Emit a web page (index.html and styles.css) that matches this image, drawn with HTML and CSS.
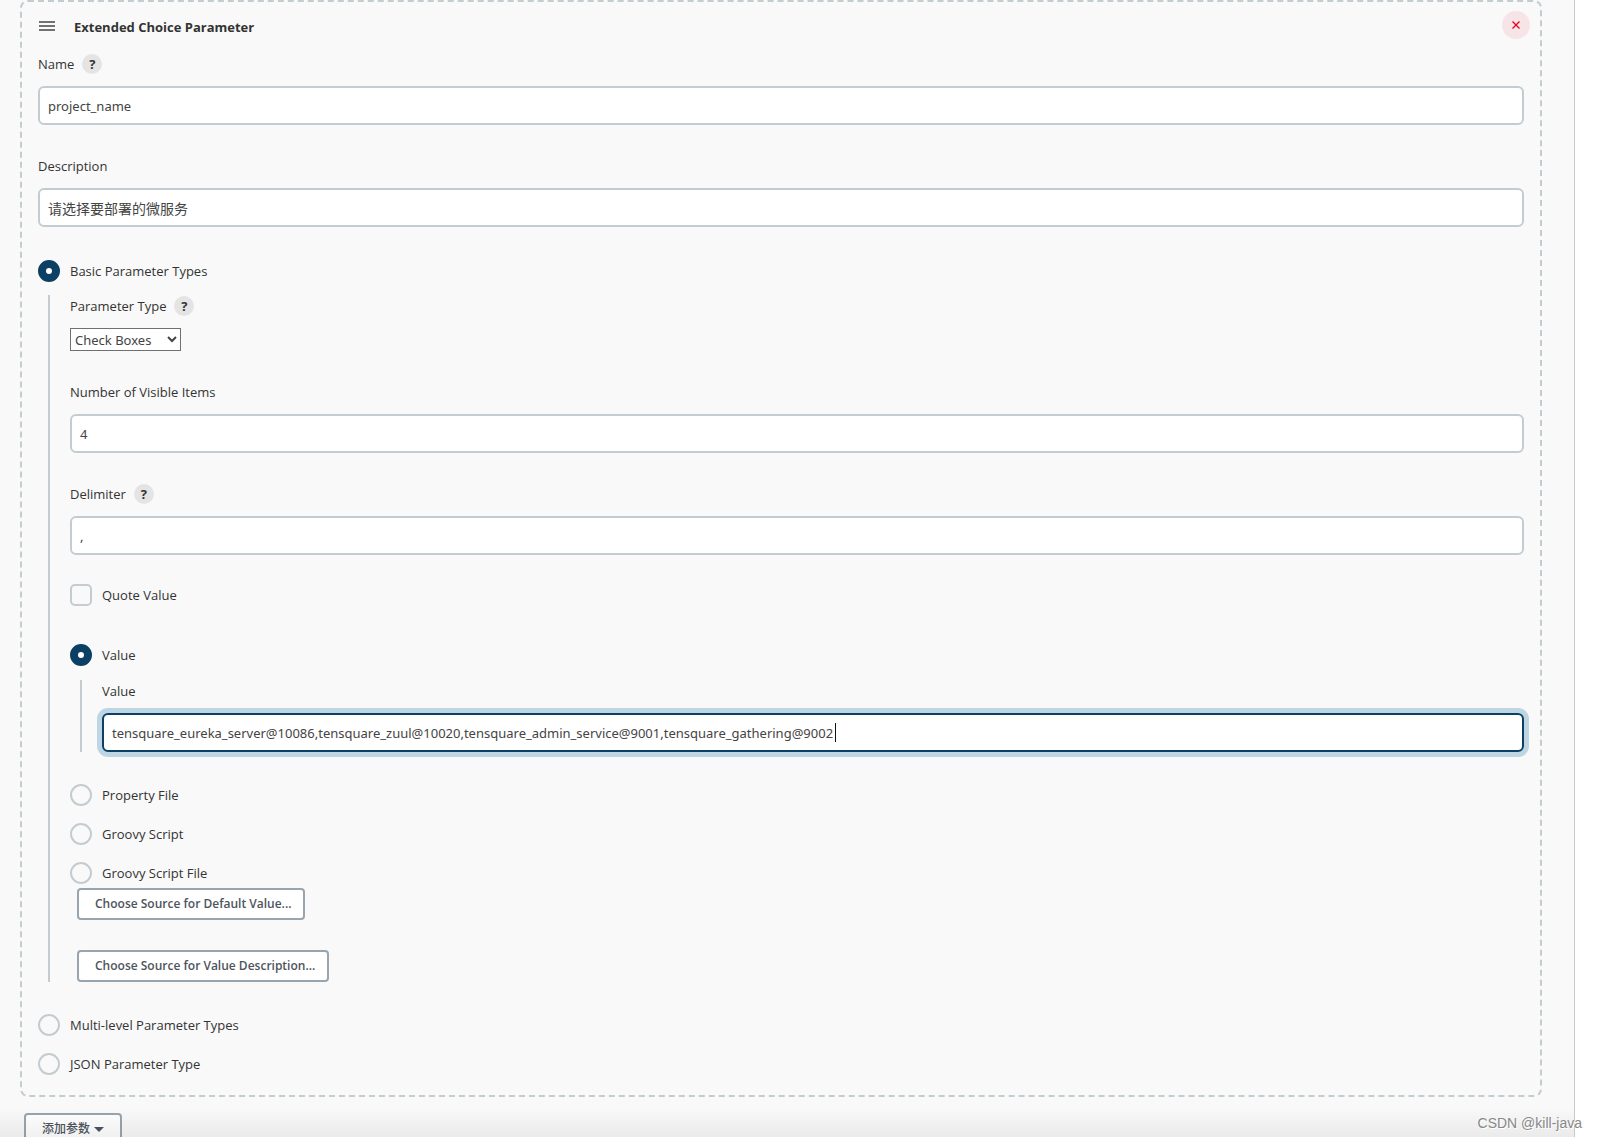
FILE: index.html
```html
<!DOCTYPE html>
<html lang="zh-CN">
<head>
<meta charset="utf-8">
<meta name="viewport" content="width=device-width, initial-scale=1">
<title>Extended Choice Parameter</title>
<link rel="stylesheet" href="styles.css">
</head>
<body>
<main class="panel">
  <form class="content">
    <section class="chunk">
      <header class="chunk-header">
        <svg class="drag" viewBox="0 0 16 10" aria-hidden="true"><path d="M0 1h16M0 5h16M0 9h16"/></svg>
        <h1 class="title">Extended Choice Parameter</h1>
        <button class="close" type="button" aria-label="Delete"><svg viewBox="0 0 8 8"><path d="M0.5 0.5l7 7M7.5 0.5l-7 7"/></svg></button>
      </header>

      <div class="field">
        <div class="label-row"><label for="name">Name</label><button class="help" type="button">?</button></div>
        <input class="text" id="name" type="text" value="project_name">
      </div>
      <div class="field">
        <div class="label-row"><label for="desc">Description</label></div>
        <input class="text text-cjk" id="desc" type="text" value="请选择要部署的微服务">
      </div>

      <div class="option"><input class="radio" type="radio" name="kind" id="basic" checked><label for="basic">Basic Parameter Types</label></div>
      <div class="nested">
        <div class="field">
          <div class="label-row"><label for="ptype">Parameter Type</label><button class="help" type="button">?</button></div>
          <select class="select" id="ptype"><option>Check Boxes</option></select>
        </div>
        <div class="field">
          <div class="label-row"><label for="count">Number of Visible Items</label></div>
          <input class="text" id="count" type="text" value="4">
        </div>
        <div class="field field-last">
          <div class="label-row"><label for="delim">Delimiter</label><button class="help" type="button">?</button></div>
          <input class="text" id="delim" type="text" value=",">
        </div>
        <div class="option quote"><input class="check" type="checkbox" id="quote"><label for="quote">Quote Value</label></div>

        <div class="option"><input class="radio" type="radio" name="source" id="value" checked><label for="value">Value</label></div>
        <div class="nested">
          <div class="label-row"><label for="value-text">Value</label></div>
          <div class="active">
            <input class="text text-active" id="value-text" type="text" value="tensquare_eureka_server@10086,tensquare_zuul@10020,tensquare_admin_service@9001,tensquare_gathering@9002">
            <span class="caret"></span>
          </div>
        </div>
        <div class="options">
          <div class="option"><input class="radio" type="radio" name="source" id="pfile"><label for="pfile">Property File</label></div>
          <div class="option"><input class="radio" type="radio" name="source" id="groovy"><label for="groovy">Groovy Script</label></div>
          <div class="option"><input class="radio" type="radio" name="source" id="gfile"><label for="gfile">Groovy Script File</label></div>
        </div>
        <div class="sources">
          <button class="button" type="button">Choose Source for Default Value...</button>
          <button class="button" type="button">Choose Source for Value Description...</button>
        </div>
      </div>
      <div class="options">
        <div class="option"><input class="radio" type="radio" name="kind" id="multi"><label for="multi">Multi-level Parameter Types</label></div>
        <div class="option"><input class="radio" type="radio" name="kind" id="json"><label for="json">JSON Parameter Type</label></div>
      </div>
    </section>
    <button class="button add" type="button">添加参数 <span class="arrow"></span></button>
  </form>
  <div class="fade"></div>
</main>
<div class="watermark">CSDN @kill-java</div>
</body>
</html>
```
FILE: styles.css
```css
* { box-sizing: border-box; }

body {
  margin: 0;
  height: 100vh;
  padding: 0 22px 3px 0;
  position: relative;
  overflow: hidden;
  background: #fff;
  color: #333;
  font: 500 13px/20px "Open Sans", "Noto Sans CJK SC", sans-serif;
}

.panel {
  position: relative;
  height: 100%;
  overflow: hidden;
  background: #f9f9f9;
  border-right: 1px solid #c4cbcd;
}

.content { padding: 0 32px 0 20px; }

.chunk {
  padding: 9px 16px 20px;
  border: 2px dashed #c3cdd1;
  border-radius: 8px;
}

.chunk-header {
  display: flex;
  align-items: center;
  height: 28px;
  margin: 0 -6px 15px 0;
}

.drag {
  width: 16px;
  height: 10px;
  margin: 2px 0 0 1px;
  fill: none;
  stroke: #444;
  stroke-width: 1.5;
}

.title {
  flex: 1;
  margin: 4px 0 0 19px;
  font-size: 13px;
  line-height: 20px;
  font-weight: 700;
}

.close {
  display: grid;
  place-items: center;
  width: 28px;
  height: 28px;
  padding: 0;
  border: 0;
  border-radius: 50%;
  background: #f7e4e6;
}

.close svg {
  width: 8px;
  height: 8px;
  stroke: #e6001f;
  stroke-width: 1.3;
}

.field { margin-bottom: 31px; }
.field-last { margin-bottom: 29px; }

.label-row {
  display: flex;
  align-items: center;
  gap: 8px;
  height: 20px;
  margin-bottom: 12px;
}

.help {
  width: 20px;
  height: 20px;
  padding: 0;
  border: 0;
  border-radius: 50%;
  background: #e4e4e4;
  color: #333;
  font: 700 13px/20px "Open Sans", sans-serif;
}

.text {
  display: block;
  width: 100%;
  height: 39px;
  padding: 0 8px;
  border: 2px solid #c3cdd1;
  border-radius: 6px;
  background: #fff;
  color: #444;
  font: 400 13px/20px "Noto Sans", "Noto Sans CJK SC", sans-serif;
  outline: 0;
}

.text-cjk {
  font-size: 14px;
  font-family: "Noto Sans CJK SC", sans-serif;
}

.active { position: relative; }

.text-active {
  border-color: #0b4064;
  box-shadow: 0 0 0 5px #bed5e3;
}

.caret {
  position: absolute;
  left: 733px;
  top: 10px;
  width: 1px;
  height: 19px;
  background: #111;
}

.select {
  display: block;
  width: 111px;
  height: 23px;
  padding: 0;
  border: 1px solid #707070;
  border-radius: 0;
  background: #fff;
  color: #444;
  font: 400 13px/20px "Noto Sans", sans-serif;
}

.option {
  display: flex;
  align-items: center;
  gap: 10px;
  height: 22px;
}

.field + .option { margin-top: 33px; }
.field + .quote { margin: 0 0 38px; }

.radio, .check {
  appearance: none;
  width: 22px;
  height: 22px;
  margin: 0;
  border: 2px solid #c3cdd1;
  border-radius: 50%;
}

.check { border-radius: 5px; }

.radio:checked {
  border: 8px solid #0b4064;
  background: #fff;
}

.nested {
  margin: 13px 0 0 10px;
  padding: 1px 0 0 20px;
  border-left: 2px solid #c3cdd1;
}

.nested .nested { margin-top: 14px; }

.options {
  display: grid;
  gap: 17px;
  margin-top: 32px;
}

.sources {
  display: grid;
  justify-items: start;
  gap: 30px;
  margin: 4px 0 0 7px;
}

.button {
  height: 32px;
  padding: 0 12px 0 16px;
  border: 2px solid #98a5af;
  border-radius: 4px;
  background: #fff;
  color: #4d545d;
  font: 600 12px/20px "Open Sans", "Noto Sans CJK SC", sans-serif;
}

.add {
  display: flex;
  align-items: center;
  gap: 4px;
  margin: 16px 0 0 4px;
  padding: 0 16px;
  font-weight: 500;
}

.arrow {
  border: 5px solid transparent;
  border-top-color: #4d545d;
  border-bottom: 0;
}

.fade {
  position: absolute;
  left: 0;
  right: 0;
  bottom: 0;
  height: 30px;
  background: linear-gradient(rgba(0, 0, 0, 0), rgba(0, 0, 0, 0.06));
  pointer-events: none;
}

.watermark {
  position: absolute;
  right: 15px;
  bottom: 7px;
  color: #888;
  font: 400 14px/20px "Liberation Sans", Arial, sans-serif;
  text-shadow: 1px 1px 0 #fff;
}
```
